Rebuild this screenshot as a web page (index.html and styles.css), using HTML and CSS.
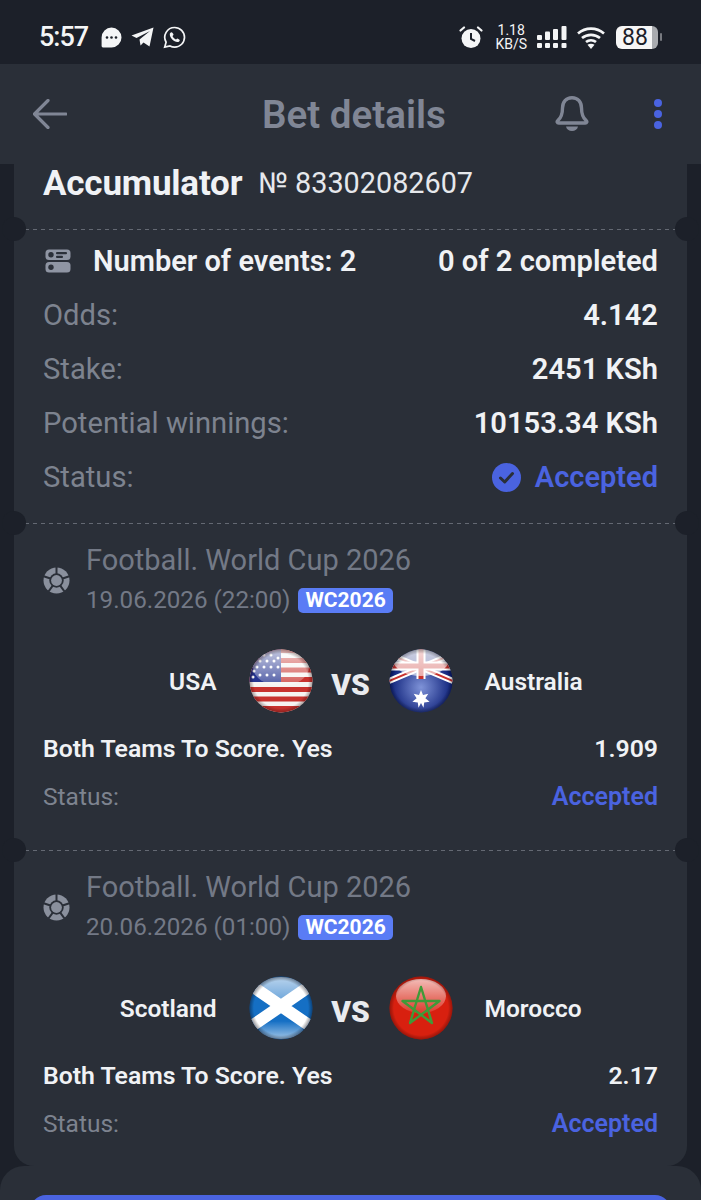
FILE: index.html
```html
<!DOCTYPE html>
<html lang="en">
<head>
<meta charset="utf-8">
<title>Bet details</title>
<link rel="stylesheet" href="styles.css">
</head>
<body>
<div class="screen">
  <div class="statusbar">
    <div class="sb-left">
      <span class="time">5:57</span>
      <svg class="sb-icon" width="21" height="21" viewBox="0 0 21 21"><path d="M10.500 0.500a10 10 0 1 1 0 20H2a1.400 1.400 0 0 1-1.400-1.400V10.500a10 10 0 0 1 9.900-10z" fill="#f4f5f6"/><circle cx="6" cy="10.500" r="1.300" fill="#1c2029"/><circle cx="10.500" cy="10.500" r="1.300" fill="#1c2029"/><circle cx="15" cy="10.500" r="1.300" fill="#1c2029"/></svg>
      <svg class="sb-icon" width="23" height="20" viewBox="0 0 23 20"><path d="M22.500 0.500 18.500 19.500 12.500 15.500 9.500 18.500 8.500 12.500 19 4 5.500 11 0.500 8.500z" fill="#f4f5f6"/></svg>
      <svg class="sb-icon" width="23" height="23" viewBox="0 0 23 23"><path d="M11.700 1.500a9.800 9.800 0 0 1 0 19.600c-1.700 0-3.300-.4-4.700-1.200l-5.300 1.300 1.400-5a9.800 9.800 0 0 1 8.600-14.700z" fill="none" stroke="#f4f5f6" stroke-width="1.700"/><path d="M8.300 6.300c-.6 0-1.500.9-1.500 2.300 0 3.300 4.100 7.500 7.600 7.500 1.500 0 2.400-1 2.400-1.800 0-.7-2-1.900-2.500-1.900-.5 0-.8 1-1.300 1-1.100 0-3.400-2.400-3.400-3.300 0-.5.9-.9.900-1.400 0-.5-1.200-2.400-2.200-2.400z" fill="#f4f5f6"/></svg>
    </div>
    <div class="sb-right">
      <svg class="sb-icon alarm" width="24" height="24" viewBox="0 0 24 24"><circle cx="12" cy="13.500" r="9.500" fill="#f4f5f6"/><path d="M12 8v6l4 2" fill="none" stroke="#1c2029" stroke-width="2"/><path d="M1.500 5.500 5 2.500M22.500 5.500 19 2.500" stroke="#f4f5f6" stroke-width="2.200" stroke-linecap="round"/></svg>
      <div class="speed"><span>1.18</span><span>KB/S</span></div>
      <svg class="sb-icon" width="30" height="22" viewBox="0 0 30 22"><g fill="#f4f5f6"><rect x="0" y="9" width="5" height="5" rx="1"/><rect x="8" y="5.500" width="5" height="8.500" rx="1"/><rect x="16" y="3" width="5" height="11" rx="1"/><rect x="24.500" y="0" width="5" height="14" rx="1"/><rect x="0" y="17" width="5" height="5" rx="1"/><rect x="8" y="17" width="5" height="5" rx="1"/><rect x="16" y="17" width="5" height="5" rx="1"/><rect x="24.500" y="17" width="5" height="5" rx="1"/></g></svg>
      <svg class="sb-icon" width="28" height="23" viewBox="0 0 28 23"><g fill="none" stroke="#f4f5f6" stroke-width="2.700"><path d="M1 7.500c7.500-6.500 18.500-6.500 26 0"/><path d="M5 12c5.200-4.300 12.800-4.300 18 0"/><path d="M9 16c2.900-2.300 7.100-2.300 10 0"/></g><path d="M14 23 10.500 18.800c2-1.500 5-1.500 7 0z" fill="#f4f5f6"/></svg>
      <div class="battery"><span class="battery-body">88</span><span class="battery-cap"></span></div>
    </div>
  </div>

  <header class="topbar">
    <svg class="back" width="34" height="30" viewBox="0 0 34 30"><path d="M33 15H2M15 1.500 1.500 15 15 28.500" fill="none" stroke="#808695" stroke-width="3.200" stroke-linecap="round" stroke-linejoin="round"/></svg>
    <h1 class="title">Bet details</h1>
    <svg class="bell" width="34" height="36" viewBox="0 0 34 36"><path d="M17 1.700c-6 0-9.500 4.600-9.500 10.300 0 7-1.500 10-4.700 12.600-1.200 1-.6 2.400.9 2.400h26.600c1.500 0 2.100-1.400.9-2.400-3.200-2.600-4.700-5.600-4.700-12.600 0-5.700-3.500-10.300-9.500-10.300z" fill="none" stroke="#808695" stroke-width="3.400" stroke-linejoin="round"/><path d="M11 30.500h12c-.5 2.800-3 4.500-6 4.500s-5.500-1.700-6-4.500z" fill="#808695"/></svg>
    <div class="kebab"><i></i><i></i><i></i></div>
  </header>

  <main class="card">
    <section class="heading">
      <span class="heading-name">Accumulator</span>
      <span class="heading-num">№ 83302082607</span>
    </section>

    <div class="perf"></div>
    <section class="summary">
      <div class="row">
        <span class="events">
          <svg width="26" height="24" viewBox="0 0 26 24"><rect x="0.500" y="0.500" width="25" height="10.500" rx="3.500" fill="#8f95a3"/><rect x="0.500" y="13" width="25" height="10.500" rx="3.500" fill="#8f95a3"/><circle cx="6" cy="5.800" r="2.700" fill="#2a2f38"/><circle cx="6" cy="18.200" r="2.700" fill="#2a2f38"/><rect x="11" y="3" width="11" height="2.200" rx="1" fill="#2a2f38"/><rect x="11" y="6.800" width="7" height="2.200" rx="1" fill="#2a2f38"/></svg>
          Number of events: 2
        </span>
        <span class="val">0 of 2 completed</span>
      </div>
      <div class="row"><span class="lbl">Odds:</span><span class="val">4.142</span></div>
      <div class="row"><span class="lbl">Stake:</span><span class="val">2451 KSh</span></div>
      <div class="row"><span class="lbl">Potential winnings:</span><span class="val">10153.34 KSh</span></div>
      <div class="row">
        <span class="lbl">Status:</span>
        <span class="accepted">
          <svg width="29" height="29" viewBox="0 0 29 29"><circle cx="14.500" cy="14.500" r="14.500" fill="#4a63e0"/><path d="M8.500 15l4.200 4 7.800-8.500" fill="none" stroke="#2a2f38" stroke-width="3" stroke-linecap="round" stroke-linejoin="round"/></svg>
          Accepted
        </span>
      </div>
    </section>

    <div class="perf"></div>
    <section class="event">
      <div class="ev-head">
        <svg class="ball" width="27" height="27" viewBox="0 0 27 27"><circle cx="13.500" cy="13.500" r="13" fill="#8a909d"/><g stroke="#2a2f38" stroke-width="2"><path d="M13.500 13.500V0M13.500 13.500 26.400 9.300M13.500 13.500 21.400 24.400M13.500 13.500 5.600 24.400M13.500 13.500 .6 9.300"/></g><circle cx="13.500" cy="13.500" r="7.200" fill="#2a2f38"/><circle cx="13.500" cy="13.500" r="5.400" fill="#8a909d"/></svg>
        <div class="ev-text">
          <div class="ev-title">Football. World Cup 2026</div>
          <div class="ev-date">19.06.2026 (22:00) <span class="tag">WC2026</span></div>
        </div>
      </div>
      <div class="teams">
        <span class="team team-l">USA</span>
        <svg class="flag" width="64" height="64" viewBox="0 0 64 64">
          <defs>
            <clipPath id="c1"><circle cx="32" cy="32" r="31.500"/></clipPath>
            <linearGradient id="g1" x1="0" y1="0" x2="0" y2="1"><stop offset="0" stop-color="#fff" stop-opacity=".75"/><stop offset="1" stop-color="#fff" stop-opacity=".2"/></linearGradient>
            <radialGradient id="e1" cx=".5" cy=".5" r=".5"><stop offset=".85" stop-color="#000" stop-opacity="0"/><stop offset="1" stop-color="#300" stop-opacity=".4"/></radialGradient>
          </defs>
          <g clip-path="url(#c1)">
            <rect width="64" height="64" fill="#f6f3f1"/>
            <g fill="#c8322e"><rect y="0" width="64" height="4"/><rect y="9" width="64" height="5"/><rect y="18.500" width="64" height="5"/><rect y="28" width="64" height="5"/><rect y="38" width="64" height="5"/><rect y="47.500" width="64" height="5"/><rect y="57" width="64" height="7"/></g>
            <rect width="32" height="33" fill="#24338f"/>
            <g fill="#fff"><circle cx="5" cy="22" r="1.500"/><circle cx="11" cy="26" r="1.500"/><circle cx="18" cy="26" r="1.500"/><circle cx="25" cy="26" r="1.500"/><circle cx="8" cy="18" r="1.500"/><circle cx="15" cy="18" r="1.500"/><circle cx="22" cy="18" r="1.500"/><circle cx="29" cy="18" r="1.500"/><circle cx="11" cy="12" r="1.500"/><circle cx="18" cy="12" r="1.500"/><circle cx="25" cy="12" r="1.500"/><circle cx="15" cy="6" r="1.500"/><circle cx="22" cy="6" r="1.500"/><circle cx="4" cy="28" r="1.500"/><circle cx="29" cy="9" r="1.500"/></g>
            <ellipse cx="32" cy="18" rx="28" ry="19" fill="url(#g1)"/>
            <rect width="64" height="64" fill="url(#e1)"/>
          </g>
        </svg>
        <span class="vs">VS</span>
        <svg class="flag" width="64" height="64" viewBox="0 0 64 64">
          <defs>
            <clipPath id="c2"><circle cx="32" cy="32" r="31.500"/></clipPath>
            <linearGradient id="g2" x1="0" y1="0" x2="0" y2="1"><stop offset="0" stop-color="#fff" stop-opacity=".85"/><stop offset="1" stop-color="#fff" stop-opacity=".6"/></linearGradient>
            <radialGradient id="b2" cx=".5" cy=".6" r=".5"><stop offset="0" stop-color="#7f93d8"/><stop offset="1" stop-color="#0c1f78"/></radialGradient>
            <radialGradient id="e2" cx=".5" cy=".5" r=".5"><stop offset=".85" stop-color="#000" stop-opacity="0"/><stop offset="1" stop-color="#000" stop-opacity=".35"/></radialGradient>
          </defs>
          <g clip-path="url(#c2)">
            <rect width="64" height="64" fill="url(#b2)"/>
            <path d="M0 5 64 32M64 5 0 32" stroke="#fff" stroke-width="6"/>
            <path d="M0 5 64 32M64 5 0 32" stroke="#c8322e" stroke-width="2"/>
            <path d="M32 0v30M0 17h64" stroke="#fff" stroke-width="9"/>
            <path d="M32 0v30M0 17h64" stroke="#c8322e" stroke-width="5"/>
            <ellipse cx="32" cy="11" rx="28" ry="16" fill="url(#g2)"/>
            <path d="M32 41l2 5 5.300-1.300-2.900 4.600 4.200 3.400-5.400.7-.7 5.400-2.500-4.800-2.500 4.800-.7-5.400-5.400-.7 4.200-3.400-2.900-4.600 5.300 1.300z" fill="#fff"/>
            <rect width="64" height="64" fill="url(#e2)"/>
          </g>
        </svg>
        <span class="team team-r">Australia</span>
      </div>
      <div class="bet"><span>Both Teams To Score. Yes</span><span>1.909</span></div>
      <div class="ev-status"><span class="lbl-s">Status:</span><span class="acc-s">Accepted</span></div>
    </section>

    <div class="perf"></div>
    <section class="event event-last">
      <div class="ev-head">
        <svg class="ball" width="27" height="27" viewBox="0 0 27 27"><circle cx="13.500" cy="13.500" r="13" fill="#8a909d"/><g stroke="#2a2f38" stroke-width="2"><path d="M13.500 13.500V0M13.500 13.500 26.400 9.300M13.500 13.500 21.400 24.400M13.500 13.500 5.600 24.400M13.500 13.500 .6 9.300"/></g><circle cx="13.500" cy="13.500" r="7.200" fill="#2a2f38"/><circle cx="13.500" cy="13.500" r="5.400" fill="#8a909d"/></svg>
        <div class="ev-text">
          <div class="ev-title">Football. World Cup 2026</div>
          <div class="ev-date">20.06.2026 (01:00) <span class="tag">WC2026</span></div>
        </div>
      </div>
      <div class="teams">
        <span class="team team-l">Scotland</span>
        <svg class="flag" width="64" height="64" viewBox="0 0 64 64">
          <defs>
            <clipPath id="c3"><circle cx="32" cy="32" r="31.500"/></clipPath>
            <linearGradient id="g3" x1="0" y1="0" x2="0" y2="1"><stop offset="0" stop-color="#fff" stop-opacity=".7"/><stop offset="1" stop-color="#fff" stop-opacity=".35"/></linearGradient>
            <linearGradient id="l3" x1="0" y1="0" x2="0" y2="1"><stop offset="0" stop-color="#fff" stop-opacity="0"/><stop offset="1" stop-color="#fff" stop-opacity=".6"/></linearGradient>
            <radialGradient id="e3" cx=".5" cy=".5" r=".5"><stop offset=".85" stop-color="#000" stop-opacity="0"/><stop offset="1" stop-color="#001" stop-opacity=".45"/></radialGradient>
          </defs>
          <g clip-path="url(#c3)">
            <rect width="64" height="64" fill="#156fc4"/>
            <ellipse cx="32" cy="54" rx="22" ry="9" fill="url(#l3)"/>
            <path d="M0 8 64 52M64 8 0 52" stroke="#fff" stroke-width="12"/>
            <ellipse cx="32" cy="14" rx="26" ry="13" fill="url(#g3)"/>
            <rect width="64" height="64" fill="url(#e3)"/>
          </g>
        </svg>
        <span class="vs">VS</span>
        <svg class="flag" width="64" height="64" viewBox="0 0 64 64">
          <defs>
            <clipPath id="c4"><circle cx="32" cy="32" r="31.500"/></clipPath>
            <linearGradient id="g4" x1="0" y1="0" x2="0" y2="1"><stop offset="0" stop-color="#fff" stop-opacity=".7"/><stop offset="1" stop-color="#fff" stop-opacity=".12"/></linearGradient>
            <radialGradient id="e4" cx=".5" cy=".5" r=".5"><stop offset=".85" stop-color="#000" stop-opacity="0"/><stop offset="1" stop-color="#300" stop-opacity=".4"/></radialGradient>
          </defs>
          <g clip-path="url(#c4)">
            <rect width="64" height="64" fill="#d8200f"/>
            <ellipse cx="32" cy="20" rx="25" ry="17" fill="url(#g4)"/>
            <path d="M32 11 43 47 13.500 25h37L21 47z" fill="none" stroke="#3f9a38" stroke-width="2.400" stroke-linejoin="round"/>
            <rect width="64" height="64" fill="url(#e4)"/>
          </g>
        </svg>
        <span class="team team-r">Morocco</span>
      </div>
      <div class="bet"><span>Both Teams To Score. Yes</span><span>2.17</span></div>
      <div class="ev-status"><span class="lbl-s">Status:</span><span class="acc-s">Accepted</span></div>
    </section>
  </main>

  <div class="sheet"><div class="sheet-btn"></div></div>
</div>
</body>
</html>
```

FILE: styles.css
```css
* { box-sizing: border-box; }
html, body { margin: 0; padding: 0; background: #1c2029; }
.screen {
  width: 701px;
  height: 1200px;
  overflow: hidden;
  display: flex;
  flex-direction: column;
  font-family: Roboto, "Liberation Sans", sans-serif;
  color: #f0f2f5;
}

/* status bar */
.statusbar {
  flex: 0 0 64px;
  background: #1c2029;
  display: flex;
  justify-content: space-between;
  align-items: center;
  padding: 10px 39px 0 39px;
  color: #f4f5f6;
}
.sb-left, .sb-right { display: flex; align-items: center; }
.sb-left { gap: 9px; }
.sb-right { gap: 10px; }
.time { font-size: 27px; font-weight: 500; letter-spacing: -1px; margin-right: 4px; }
.sb-icon { display: block; flex: none; }
.alarm { margin-right: 2px; }
.speed { display: flex; flex-direction: column; align-items: center; font-size: 14px; line-height: 14px; }
.battery { display: flex; align-items: center; gap: 2px; margin-left: 1px; }
.battery-body {
  width: 42px; height: 23px; border-radius: 6px;
  background: linear-gradient(90deg, #f6f6f6 85%, #a9abaf 85%);
  color: #1c2029; font-size: 23px; line-height: 23px; text-align: center;
  padding-right: 4px;
}
.battery-cap { width: 2px; height: 8px; background: #777a80; border-radius: 1px; }

/* top bar */
.topbar {
  flex: 0 0 100px;
  background: #2a2f38;
  display: flex;
  align-items: center;
  padding: 0 39px 0 33px;
  position: relative;
  z-index: 1;
}
.back { flex: none; }
.title {
  flex: 1;
  margin: 0;
  padding-left: 195px;
  font-size: 38.600px;
  font-weight: 600;
  color: #808695;
}
.bell { flex: none; margin-right: 65px; }
.kebab { display: flex; flex-direction: column; gap: 3px; }
.kebab i { width: 8px; height: 8px; border-radius: 50%; background: #4a63e0; display: block; }

/* ticket card */
.card {
  flex: 0 0 1002px;
  margin: 0 14px;
  background: #2a2f38;
  border-radius: 0 0 20px 20px;
  padding: 0 29px;
}
.heading {
  height: 65px;
  display: flex;
  align-items: center;
  gap: 16px;
  padding-bottom: 27px;
}
.heading-name { font-size: 35px; font-weight: 700; letter-spacing: -.2px; }
.heading-num { font-size: 28.800px; color: #e6e8ec; }

.perf {
  height: 1px;
  background: repeating-linear-gradient(90deg, #646973 0 4px, transparent 4px 8px);
  margin: 0 -18px;
  position: relative;
}
.perf::before, .perf::after {
  content: "";
  position: absolute;
  top: -12px;
  width: 24px;
  height: 24px;
  border-radius: 50%;
  background: #1c2029;
}
.perf::before { left: -23px; }
.perf::after { right: -23px; }

.summary { height: 293px; padding-top: 4px; }
.row {
  height: 54px;
  display: flex;
  justify-content: space-between;
  align-items: center;
  font-size: 29px;
}
.events { display: flex; align-items: center; gap: 22px; font-weight: 600; padding-left: 2px; }
.lbl { color: #7d838f; font-size: 29.200px; }
.val { font-weight: 600; font-size: 29.100px; }
.accepted { display: flex; align-items: center; gap: 14px; color: #4a63e0; font-weight: 600; }

/* event */
.event { height: 326px; padding-top: 16px; }
.event-last { height: 314px; }
.ev-head { display: flex; align-items: center; gap: 16px; }
.ball { flex: none; }
.ev-title { font-size: 29px; line-height: 40px; color: #737986; }
.ev-date { font-size: 24.200px; line-height: 40px; color: #737986; display: flex; align-items: center; gap: 8px; }
.tag {
  background: #5a7cf5;
  color: #fff;
  font-size: 21px;
  font-weight: 700;
  line-height: 25px;
  padding: 0 7px;
  border-radius: 5px;
}
.teams {
  margin-top: 29px;
  display: grid;
  grid-template-columns: 1fr 64px 76px 64px 1fr;
  align-items: center;
  height: 64px;
}
.team { font-size: 24.500px; font-weight: 600; }
.team-l { text-align: right; padding-right: 32px; }
.team-r { padding-left: 32px; }
.flag { display: block; }
.vs { text-align: center; font-size: 30px; font-weight: 900; padding-top: 6px; color: #e9ebef; }
.bet {
  margin-top: 15px;
  height: 40px;
  display: flex;
  justify-content: space-between;
  align-items: center;
  font-size: 24.800px;
  font-weight: 600;
}
.ev-status {
  margin-top: 8px;
  height: 40px;
  display: flex;
  justify-content: space-between;
  align-items: center;
  font-size: 25px;
}
.lbl-s { color: #7d838f; font-size: 24.500px; }
.acc-s { color: #4a63e0; font-weight: 600; }

/* bottom sheet */
.sheet {
  flex: 1 0 auto;
  background: #2a2f38;
  border-radius: 24px 24px 0 0;
  padding: 29px 30px 0;
}
.sheet-btn { height: 40px; background: #4a63e0; border-radius: 16px; }
```
